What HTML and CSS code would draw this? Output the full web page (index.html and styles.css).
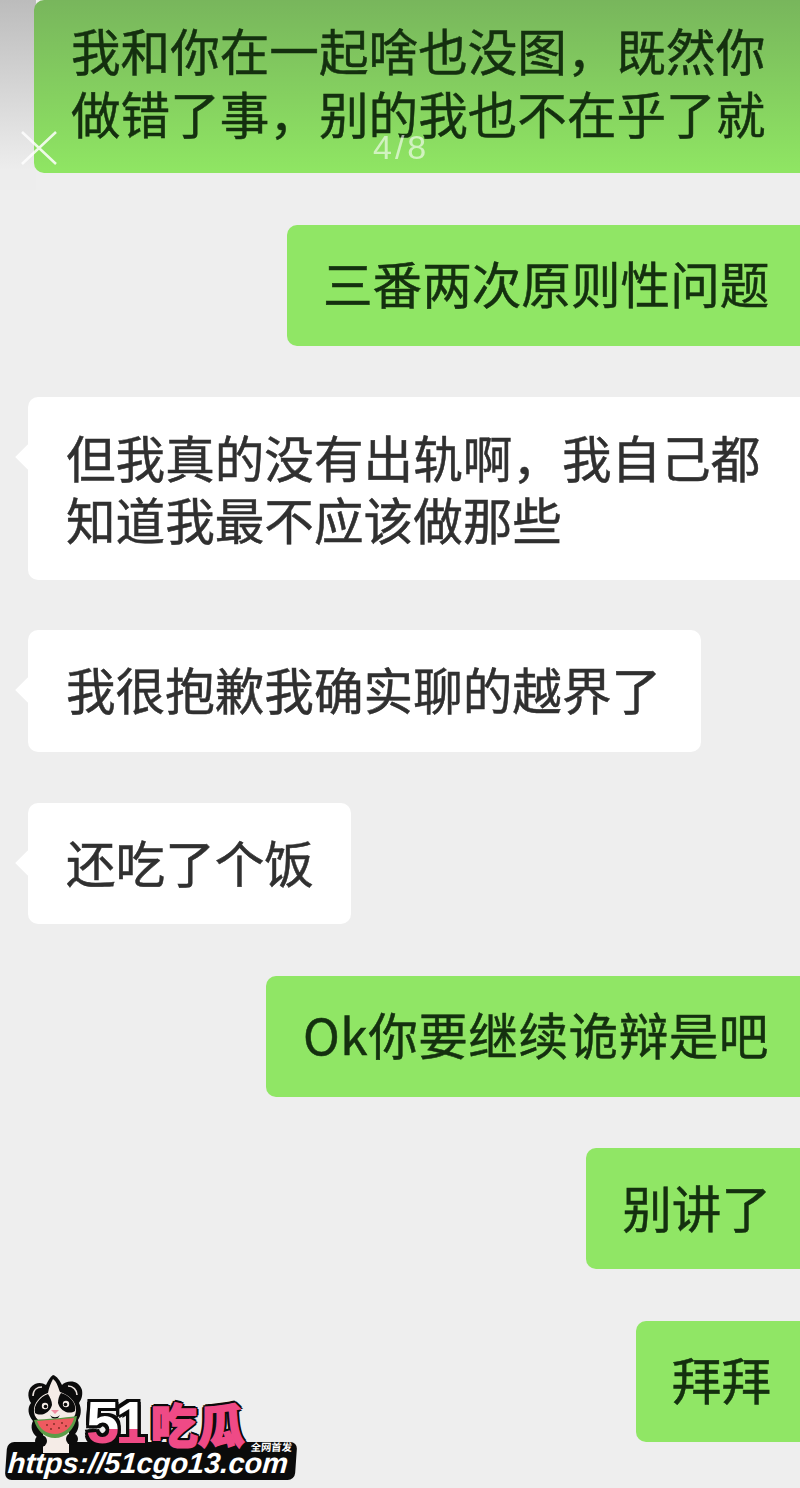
FILE: index.html
```html
<!DOCTYPE html>
<html lang="zh">
<head>
  <meta charset="UTF-8" />
  <meta name="viewport" content="width=device-width, initial-scale=1.0"/>
  <title>聊天记录 4/8</title>
  <link rel="stylesheet" href="styles.css">
</head>
<body>

  <div class="viewer">
    <div class="chat">
      <div class="bubble mine first">我和你在一起啥也没图&#xFF0C;既然你<br>做错了事&#xFF0C;别的我也不在乎了就</div>
      <div class="bubble mine second">三番两次原则性问题</div>
      <div class="bubble theirs wide">但我真的没有出轨啊&#xFF0C;我自己都<br>知道我最不应该做那些</div>
      <div class="bubble theirs sorry">我很抱歉我确实聊的越界了</div>
      <div class="bubble theirs">还吃了个饭</div>
      <div class="bubble mine excuse">Ok你要继续诡辩是吧</div>
      <div class="bubble mine">别讲了</div>
      <div class="bubble mine">拜拜</div>
    </div>

    <!-- viewer controls sit over the chat -->
    <svg class="close" viewBox="0 0 36 34" aria-label="关闭">
      <path d="M1 1 L35 33 M35 1 L1 33" />
    </svg>
    <div class="counter">4/8</div>

    <div class="logo">
      <div class="strip">
        <span class="tag">全网首发</span>
        <span class="url">https://51cgo13.com</span>
      </div>
      <div class="brand">
        <span class="brand-num">51</span>
        <span class="brand-name">吃瓜</span>
      </div>
      <svg class="mascot" viewBox="0 0 56 80">
        <!-- black silhouette -->
        <path class="black" d="M26 0 C30 1 33 6 35 10 C39 5 52 4 55 15 C56 21 54 25 52 28 C55 34 54 41 51 45 C53 52 50 58 46 61 L46 72 L10 72 L10 62 C5 58 3 52 6 46 C1 40 0 33 4 28 C0 22 0 13 8 9 C12 7 16 8 19 10 C21 6 23 2 26 0 Z"/>
        <!-- ear rims -->
        <path class="rim" d="M6 21 C6 15 10 12 15 12 M50 20 C50 15 46 11 41 11"/>
        <!-- head and tuft -->
        <path class="fur" d="M26 4 C30 7 31 12 33 17 C40 19 50 26 49 36 C48 46 38 50 28 50 C17 50 8 46 7 37 C6 28 14 20 21 18 C22 12 24 8 26 4 Z"/>
        <path class="black" d="M21 19 C13 22 6 30 8 38 C14 42 23 38 25 30 C25 26 23 22 21 19 Z M34 18 C42 20 50 28 48 36 C42 40 33 36 31 28 C31 24 32 21 34 18 Z"/>
        <circle class="fur" cx="18" cy="31" r="3.2"/>
        <circle class="fur" cx="39" cy="29" r="3.2"/>
        <circle class="black" cx="18.5" cy="31.5" r="1.8"/>
        <circle class="black" cx="38.5" cy="29.5" r="1.8"/>
        <path class="pink" d="M24 35 H32 L28 39 Z"/>
        <path class="black" d="M23 40 C26 43 30 43 33 40 L31 43 C29 44 27 44 25 43 Z"/>
        <!-- body below the melon -->
        <path class="fur" d="M16 56 H42 V78 H16 Z"/>
        <ellipse class="black" cx="14" cy="66" rx="6" ry="6"/>
        <ellipse class="black" cx="45" cy="64" rx="6" ry="6"/>
        <!-- watermelon slice -->
        <path class="rind" d="M7 45 C20 44 36 43 50 41 C48 55 38 63 28 63 C18 63 10 56 7 45 Z"/>
        <path class="melon" d="M10 46 C20 45 36 44 47 43 C45 52 37 59 28 59 C19 59 13 54 10 46 Z"/>
        <circle class="seed" cx="20" cy="50" r="0.9"/>
        <circle class="seed" cx="27" cy="49" r="0.9"/>
        <circle class="seed" cx="35" cy="48" r="0.9"/>
        <circle class="seed" cx="24" cy="54" r="0.9"/>
        <circle class="seed" cx="32" cy="53" r="0.9"/>
        <circle class="seed" cx="39" cy="51" r="0.9"/>
      </svg>
    </div>
  </div>

</body>
</html>
```

FILE: styles.css
```css
html, body {
  margin: 0;
  padding: 0;
}

body {
  width: 800px;
  height: 1488px;
  overflow: hidden;
  background: #eeeeee;
  font-family: "Noto Sans CJK SC", "Noto Sans", sans-serif;
}

.viewer {
  position: relative;
  height: 1488px;
  background: linear-gradient(to bottom, #bcbcbc, #ededed 170px) no-repeat 0 0 / 36px 190px;
}

.chat {
  display: flex;
  flex-direction: column;
  gap: 51.5px;
}

.bubble {
  position: relative;
  box-sizing: border-box;
  height: 121px;
  display: flex;
  align-items: center;
  font-size: 49.6px;
  line-height: 62px;
  white-space: nowrap;
  color: #14300f;
  -webkit-text-stroke: 0.5px currentColor;
  padding-bottom: 6px;
  filter: blur(0.6px);
}

.mine {
  align-self: flex-end;
  background: #90e665;
  border-radius: 10px 0 0 10px;
  padding-left: 36px;
  padding-right: 29px;
}

.theirs {
  align-self: flex-start;
  margin-left: 28px;
  background: #fff;
  color: #303030;
  border-radius: 10px;
  padding-left: 38px;
  padding-right: 37px;
}

/* little tail pointing at the other person's avatar */
.theirs::before {
  content: "";
  position: absolute;
  left: -9px;
  top: 51px;
  width: 18px;
  height: 18px;
  background: #fff;
  transform: rotate(45deg);
}

.first {
  width: 766px;
  height: 173px;
  padding: 18px 0 0 37px;
  line-height: 63px;
  align-items: flex-start;
  background: linear-gradient(to bottom, #78b65c, #8fe563 170px);
}

.second {
  width: 513px;
}

.wide {
  width: 772px;
  height: 183px;
  padding-bottom: 4px;
  margin-bottom: -1.5px;
  border-radius: 10px 0 0 10px;
}

.sorry {
  width: 673px;
  height: 121.5px;
}

.excuse {
  width: 534px;
  padding-left: 37px;
  letter-spacing: 0.5px;
}

.close {
  position: absolute;
  left: 21px;
  top: 131px;
  width: 36px;
  height: 34px;
  fill: none;
  stroke: #fff;
  stroke-width: 2.5;
  opacity: 0.85;
}

.counter {
  position: absolute;
  left: 373px;
  top: 128px;
  font-family: "Liberation Sans", sans-serif;
  font-size: 34px;
  line-height: 38px;
  letter-spacing: 3px;
  color: #fff;
  opacity: 0.6;
}

.logo {
  position: absolute;
  left: 4px;
  top: 1374px;
  width: 293px;
  height: 108px;
}

.mascot {
  position: absolute;
  left: 23px;
  top: 1px;
  width: 56px;
  height: 80px;
}

.black {
  fill: #0b0b0b;
}

.fur {
  fill: #f5ece7;
}

.rim {
  fill: none;
  stroke: #e8e0dc;
  stroke-width: 1.6;
}

.pink {
  fill: #f08aa0;
}

.rind {
  fill: #5c9c48;
}

.melon {
  fill: #ee5a60;
}

.seed {
  fill: #7a2a22;
}

.brand {
  position: absolute;
  left: 82px;
  top: 24px;
  display: flex;
  align-items: center;
  gap: 6px;
  height: 50px;
}

/* white numerals with a pink lower half, outlined in black */
.brand-num {
  font-family: "Liberation Sans", sans-serif;
  font-weight: 700;
  font-size: 60px;
  line-height: 50px;
  letter-spacing: -4px;
  background: linear-gradient(to bottom, #fff 62%, #ee4a84 62%);
  -webkit-background-clip: text;
  background-clip: text;
  color: transparent;
  filter: drop-shadow(3px 0 0 #0b0b0b) drop-shadow(-3px 0 0 #0b0b0b) drop-shadow(0 3px 0 #0b0b0b) drop-shadow(0 -3px 0 #0b0b0b);
}

.brand-name {
  font-weight: 900;
  font-size: 47px;
  line-height: 50px;
  color: #ef4a86;
  -webkit-text-stroke: 1.5px #ef4a86;
  text-shadow: 3px 0 0 #0b0b0b, -3px 0 0 #0b0b0b, 0 3px 0 #0b0b0b, 0 -3px 0 #0b0b0b,
    2px 2px 0 #0b0b0b, -2px 2px 0 #0b0b0b, 2px -2px 0 #0b0b0b, -2px -2px 0 #0b0b0b;
}

.strip {
  position: absolute;
  left: 2px;
  top: 68px;
  width: 290px;
  height: 38px;
  background: #0b0b0b;
  border-radius: 7px;
  transform: skewX(-4deg);
}

.tag {
  position: absolute;
  right: 5px;
  top: -2px;
  font-size: 10.3px;
  line-height: 13px;
  font-weight: 700;
  color: #fff;
}

.url {
  position: absolute;
  left: 2px;
  top: 5px;
  font-family: "Liberation Sans", sans-serif;
  font-style: italic;
  font-weight: 700;
  font-size: 29px;
  line-height: 32px;
  white-space: nowrap;
  color: #fff;
}
```
